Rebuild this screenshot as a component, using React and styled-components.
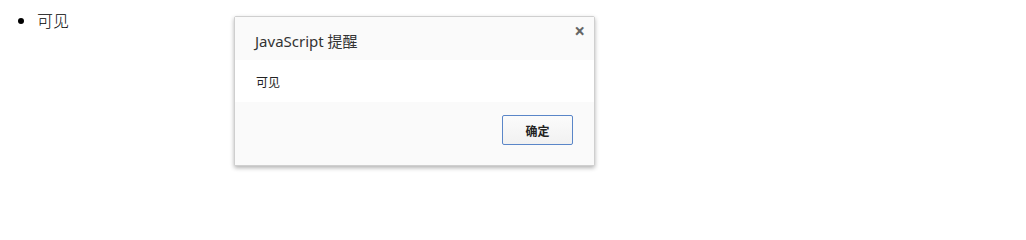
import React from "react";
import styled, { createGlobalStyle } from "styled-components";

const GlobalStyle = createGlobalStyle`
  html, body {
    margin: 0;
    background: #ffffff;
    font-family: "Noto Sans CJK SC", "Noto Sans", sans-serif;
  }
`;

const Page = styled.div`
  position: relative;
  width: 1026px;
  height: 224px;
  overflow: hidden;
`;

const List = styled.ul`
  margin: 0;
  padding: 9px 0 0 37px;
  font-size: 16px;
  line-height: 22px;
  font-weight: 300;
  color: #000;
`;

const Dialog = styled.div`
  position: absolute;
  left: 234px;
  top: 16px;
  width: 359px;
  height: 148px;
  display: flex;
  flex-direction: column;
  border: 1px solid #cfcfcf;
  border-radius: 2px;
  background: #fff;
  box-shadow: 0 2px 4px rgba(0, 0, 0, 0.3);
  font-family: "Noto Sans", "Noto Sans CJK SC", sans-serif;
`;

const Header = styled.div`
  position: relative;
  height: 40px;
  display: flex;
  align-items: center;
  padding: 3px 0 0 20px;
  background: #fafafa;
  font-size: 15px;
  color: #333;
`;

const Close = styled.span`
  position: absolute;
  right: 9px;
  top: 5px;
  font-size: 19px;
  font-weight: bold;
  color: #666;
  line-height: 19px;
`;

const Body = styled.div`
  height: 42px;
  display: flex;
  align-items: center;
  padding-left: 21px;
  font-size: 12px;
  color: #222;
  font-family: "Noto Sans CJK SC", sans-serif;
`;

const Footer = styled.div`
  flex: 1;
  display: flex;
  justify-content: flex-end;
  align-items: flex-start;
  padding: 13px 21px 0 0;
  background: #fafafa;
`;

const Button = styled.button`
  width: 71px;
  height: 30px;
  border: 1px solid #5a86c8;
  border-radius: 2px;
  background: linear-gradient(#fbfbfb, #f1f1f1);
  font-family: "Noto Sans CJK SC", sans-serif;
  font-size: 12px;
  font-weight: bold;
  color: #222;
  padding: 0;
`;

export default function App() {
  return (
    <Page>
      <GlobalStyle />
      <List>
        <li>可见</li>
      </List>
      <Dialog>
        <Header>
          JavaScript 提醒
          <Close>×</Close>
        </Header>
        <Body>可见</Body>
        <Footer>
          <Button>确定</Button>
        </Footer>
      </Dialog>
    </Page>
  );
}
